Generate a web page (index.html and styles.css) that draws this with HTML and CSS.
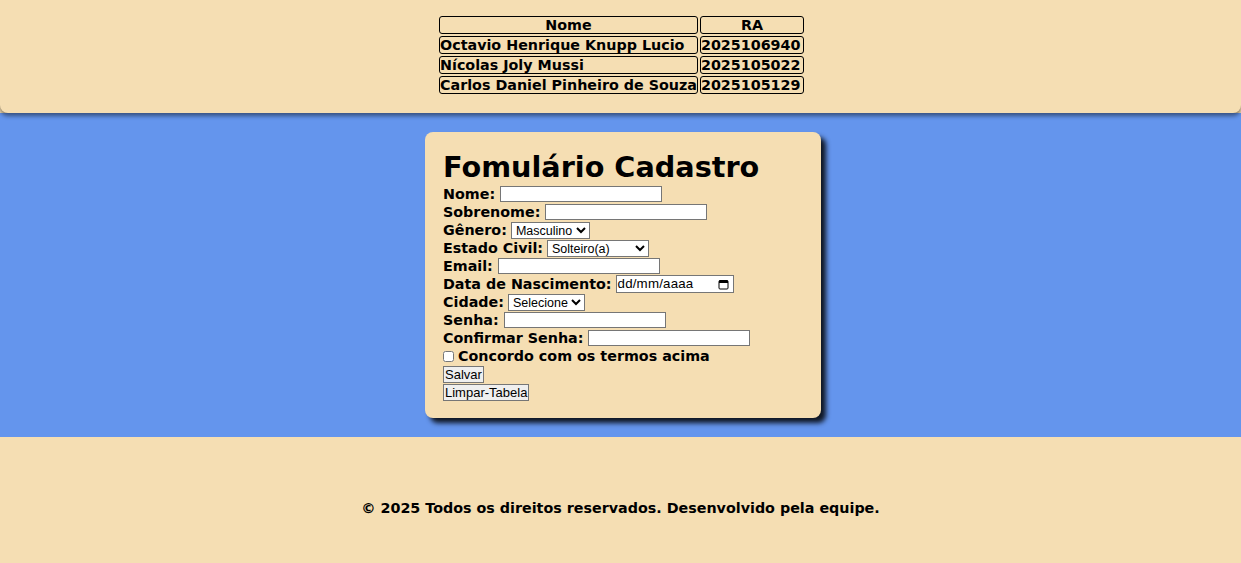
FILE: index.html
```html
<!DOCTYPE html>
<html lang="pt-BR">
<head>
<meta charset="utf-8">
<title>Cadastro</title>
<link rel="stylesheet" href="styles.css">
</head>
<body>
<header class="topo">
  <table class="equipe">
    <tr><th>Nome</th><th class="col-ra">RA</th></tr>
    <tr><td>Octavio Henrique Knupp Lucio</td><td>2025106940</td></tr>
    <tr><td>Nícolas Joly Mussi</td><td>2025105022</td></tr>
    <tr><td>Carlos Daniel Pinheiro de Souza</td><td>2025105129</td></tr>
  </table>
</header>
<main class="meio">
  <form class="cartao">
    <h1 class="titulo">Fomulário Cadastro</h1>
    <div class="linha"><label>Nome:</label> <input class="campo" type="text"></div>
    <div class="linha"><label>Sobrenome:</label> <input class="campo" type="text"></div>
    <div class="linha"><label>Gênero:</label> <select class="sel sel-gen"><option>Masculino</option><option>Feminino</option></select></div>
    <div class="linha"><label>Estado Civil:</label> <select class="sel sel-est"><option>Solteiro(a)</option><option>Casado(a)</option></select></div>
    <div class="linha"><label>Email:</label> <input class="campo" type="email"></div>
    <div class="linha"><label>Data de Nascimento:</label>
      <span class="data"><span class="data-txt">dd/mm/aaaa</span><svg class="cal" width="11" height="11" viewBox="0 0 11 11"><rect x="1" y="1.5" width="9" height="8.5" rx="1" fill="none" stroke="#000" stroke-width="1"/><rect x="1" y="1.5" width="9" height="2.5" fill="#000"/></svg></span>
    </div>
    <div class="linha"><label>Cidade:</label> <select class="sel sel-cid"><option>Selecione</option></select></div>
    <div class="linha"><label>Senha:</label> <input class="campo" type="password"></div>
    <div class="linha"><label>Confirmar Senha:</label> <input class="campo" type="password"></div>
    <div class="linha"><input class="check" type="checkbox"> <label>Concordo com os termos acima</label></div>
    <div class="linha-btn"><button class="btn" type="button">Salvar</button></div>
    <div class="linha-btn"><button class="btn" type="button">Limpar-Tabela</button></div>
  </form>
</main>
<footer class="rodape">
  <p>© 2025 Todos os direitos reservados. Desenvolvido pela equipe.</p>
</footer>
</body>
</html>
```
FILE: styles.css
```css
html, body {
  margin: 0;
  padding: 0;
}
body {
  font-family: "DejaVu Sans", Verdana, sans-serif;
  font-weight: bold;
  background: #f5deb3;
  color: #000;
}
.topo {
  background: #f5deb3;
  height: 113px;
  box-sizing: border-box;
  padding-top: 14px;
  border-bottom-left-radius: 8px;
  border-bottom-right-radius: 8px;
  box-shadow: 0 3px 4px rgba(0,0,0,0.45);
  position: relative;
  z-index: 1;
}
.equipe {
  margin: 0 auto;
  border-spacing: 2px;
  font-size: 14.3px;
  position: relative;
  left: 1px;
}
.equipe th, .equipe td {
  border: 1px solid #000;
  border-radius: 3px;
  padding: 0;
  line-height: 16px;
  height: 16px;
}
.equipe th { text-align: center; }
.equipe td { text-align: left; }
.equipe .col-ra { width: 102px; }
.meio {
  background: #6495ed;
  height: 324px;
  box-sizing: border-box;
  padding-top: 19px;
  display: flex;
  justify-content: center;
  align-items: flex-start;
}
.cartao {
  background: #f5deb3;
  width: 396px;
  box-sizing: border-box;
  padding: 18px 18px 17px;
  border-radius: 8px;
  box-shadow: 5px 5px 5px rgba(0,0,0,0.85);
  font-size: 14.3px;
  margin-left: 5px;
}
.titulo {
  margin: 0;
  font-size: 28.7px;
  line-height: 35px;
}
.linha {
  height: 18px;
  line-height: 18px;
  display: flex;
  align-items: center;
  gap: 4px;
}
.campo {
  width: 162px;
  height: 16px;
  box-sizing: border-box;
  border: 1px solid #767676;
  padding: 0 2px;
  font-size: 12px;
  background: #fff;
  margin: 0 0 0 1px;
}
.data {
  width: 118px;
  height: 18px;
  box-sizing: border-box;
  border: 1px solid #767676;
  padding: 0 4px 0 1px;
  font-family: "Liberation Sans", Arial, sans-serif;
  font-weight: normal;
  font-size: 13.3px;
  background: #fff;
  display: flex;
  align-items: center;
  justify-content: space-between;
}
.data-txt {
  letter-spacing: 0.2px;
}
.cal {
  display: block;
}
.sel {
  height: 17px;
  box-sizing: border-box;
  border: 1px solid #767676;
  border-radius: 0;
  padding: 0;
  font-family: "Liberation Sans", Arial, sans-serif;
  font-size: 12.5px;
  background: #fff;
  margin: 0;
}
.sel-est { width: 102px; }
.check {
  width: 11px;
  height: 11px;
  margin: 0;
}
.linha-btn {
  height: 18px;
  display: flex;
  align-items: center;
}
.btn {
  font-family: "Liberation Sans", Arial, sans-serif;
  font-size: 13px;
  height: 17px;
  line-height: 15px;
  padding: 0 1px;
  border: 1px solid #767676;
  background: #efefef;
  border-radius: 0;
  margin: 0;
}
.rodape {
  height: 126px;
  display: flex;
  align-items: center;
  justify-content: center;
  font-size: 14.3px;
}
.rodape p {
  margin: 16px 0 0;
}
```
